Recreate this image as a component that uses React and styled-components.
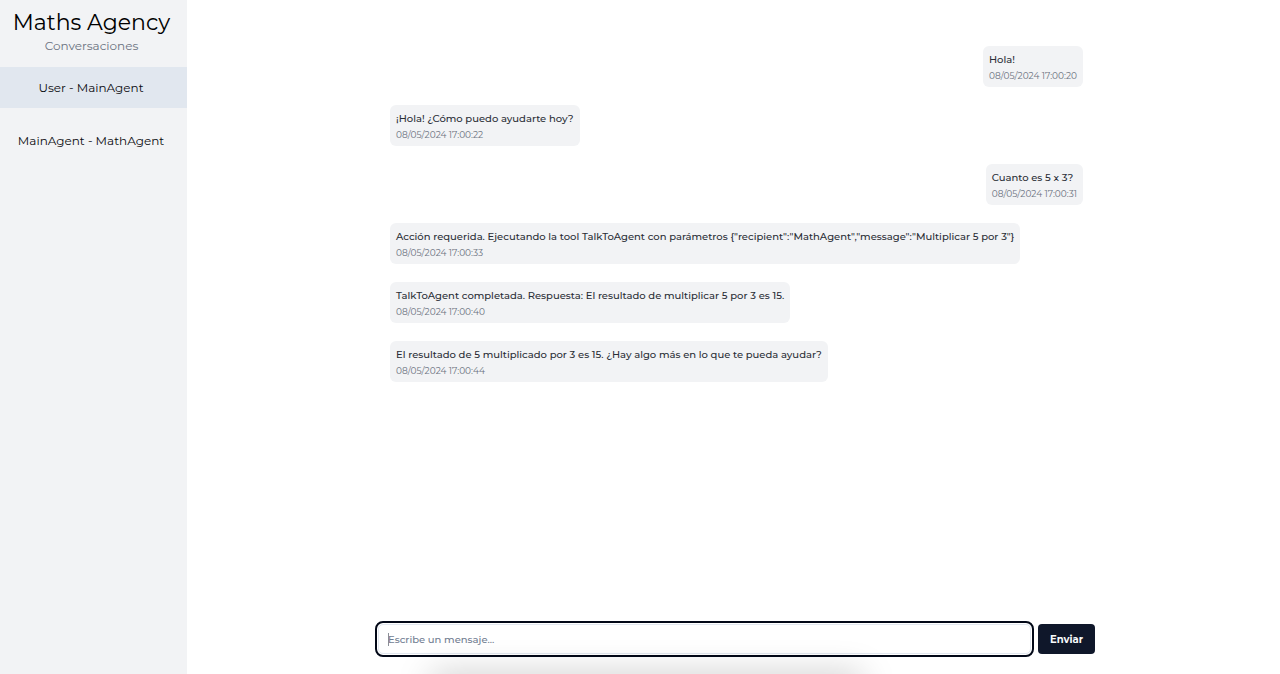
import React from "react";
import styled, { createGlobalStyle } from "styled-components";

const GlobalStyle = createGlobalStyle`
  *, *::before, *::after { box-sizing: border-box; }
  body {
    margin: 0;
    background: #fff;
    color: #020817;
    font-family: Montserrat, Inter, "Open Sans", sans-serif;
  }
  h1, h2, p { margin: 0; font-weight: 400; }
`;

const Page = styled.div`
  position: relative;
  display: flex;
  min-height: 100vh;
  overflow: hidden;
`;

const Sidebar = styled.aside`
  flex: 0 0 187px;
  padding-top: 8px;
  background: #f2f3f5;
  text-align: center;
`;

const Heading = styled.header`
  padding-right: 4px;
`;

const Title = styled.h1`
  font-size: 22px;
  line-height: 30px;
  color: #000;
  white-space: nowrap;
`;

const Subtitle = styled.h2`
  font-size: 12px;
  line-height: 16px;
  color: #6b7280;
`;

const ConversationList = styled.nav`
  display: flex;
  flex-direction: column;
  gap: 12px;
  margin-top: 13px;
`;

const Conversation = styled.button`
  height: 41px;
  padding: 0 22px 0 17px;
  border: 0;
  background: ${(p) => (p.$active ? "#e1e7ef" : "transparent")};
  color: #0b0c10;
  font: inherit;
  font-size: 12px;
  line-height: 16px;
  white-space: nowrap;
  cursor: pointer;
`;

const Main = styled.main`
  flex: 1;
  min-width: 0;
  display: flex;
  flex-direction: column;
  align-items: center;
  padding: 46px 0 20px 3px;
`;

const Messages = styled.section`
  flex: 1;
  display: flex;
  flex-direction: column;
  gap: 18px;
  width: 100%;
  max-width: 720px;
  padding: 0 12px 18px 15px;
`;

const Bubble = styled.article`
  align-self: ${(p) => (p.$own ? "flex-end" : "flex-start")};
  padding: 6px 6px 3px;
  border-radius: 6px;
  background: #f2f3f5;
`;

const Text = styled.p`
  font-size: 10px;
  font-weight: 500;
  line-height: 16px;
  color: #2a2e36;
`;

const Time = styled.time`
  display: block;
  font-size: 9px;
  line-height: 16px;
  color: #6b7280;
`;

const Composer = styled.form`
  display: flex;
  align-items: center;
  gap: 7px;
  width: 100%;
  max-width: 720px;
  padding-left: 3px;
`;

const MessageInput = styled.input`
  flex: 1;
  min-width: 0;
  height: 30px;
  margin: 0;
  padding: 0 9px;
  border: 1px solid #e2e8f0;
  border-radius: 5px;
  outline: 2px solid #020817;
  outline-offset: 1px;
  background: #fff;
  font: inherit;
  font-size: 10px;
  font-weight: 500;
  color: #020817;

  &::placeholder { color: #717d91; opacity: 1; }
  &:placeholder-shown {
    background: linear-gradient(#8b8f98, #8b8f98) 9px center / 1px 13px no-repeat #fff;
  }
`;

const SendButton = styled.button`
  width: 57px;
  height: 30px;
  padding: 0;
  border: 0;
  border-radius: 4px;
  background: #0f172a;
  color: #f8fafc;
  font: inherit;
  font-size: 10px;
  font-weight: 700;
  cursor: pointer;
`;

const BottomShadow = styled.div`
  position: absolute;
  left: 34%;
  right: 33%;
  bottom: -16px;
  height: 10px;
  box-shadow: 0 0 34px 4px rgba(0, 0, 0, 0.28);
  pointer-events: none;
`;

const conversations = ["User - MainAgent", "MainAgent - MathAgent"];

const messages = [
  { own: true, text: "Hola!", time: "08/05/2024 17:00:20" },
  { text: "¡Hola! ¿Cómo puedo ayudarte hoy?", time: "08/05/2024 17:00:22" },
  { own: true, text: "Cuanto es 5 x 3?", time: "08/05/2024 17:00:31" },
  {
    text: 'Acción requerida. Ejecutando la tool TalkToAgent con parámetros {"recipient":"MathAgent","message":"Multiplicar 5 por 3"}',
    time: "08/05/2024 17:00:33",
  },
  {
    text: "TalkToAgent completada. Respuesta: El resultado de multiplicar 5 por 3 es 15.",
    time: "08/05/2024 17:00:40",
  },
  {
    text: "El resultado de 5 multiplicado por 3 es 15. ¿Hay algo más en lo que te pueda ayudar?",
    time: "08/05/2024 17:00:44",
  },
];

export default function App() {
  return (
    <>
      <GlobalStyle />
      <Page>
        <Sidebar>
          <Heading>
            <Title>Maths Agency</Title>
            <Subtitle>Conversaciones</Subtitle>
          </Heading>
          <ConversationList>
            {conversations.map((name, i) => (
              <Conversation key={name} type="button" $active={i === 0}>
                {name}
              </Conversation>
            ))}
          </ConversationList>
        </Sidebar>
        <Main>
          <Messages>
            {messages.map((m) => (
              <Bubble key={m.time} $own={m.own}>
                <Text>{m.text}</Text>
                <Time>{m.time}</Time>
              </Bubble>
            ))}
          </Messages>
          <Composer onSubmit={(e) => e.preventDefault()}>
            <MessageInput
              type="text"
              aria-label="Mensaje"
              placeholder="Escribe un mensaje..."
            />
            <SendButton type="submit">Enviar</SendButton>
          </Composer>
        </Main>
        <BottomShadow />
      </Page>
    </>
  );
}
